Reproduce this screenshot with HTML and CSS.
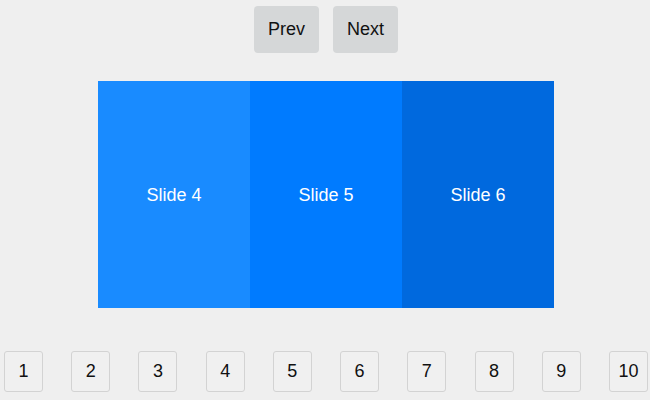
FILE: index.html
```html
<!DOCTYPE html>
<html>
<head>
<meta charset="utf-8">
<link rel="stylesheet" href="styles.css">
</head>
<body>
<div class="controls">
  <button class="nav">Prev</button>
  <button class="nav">Next</button>
</div>
<div class="viewport">
  <div class="slide s4">Slide 4</div>
  <div class="slide s5">Slide 5</div>
  <div class="slide s6">Slide 6</div>
</div>
<div class="pager">
  <button class="page">1</button>
  <button class="page">2</button>
  <button class="page">3</button>
  <button class="page">4</button>
  <button class="page">5</button>
  <button class="page">6</button>
  <button class="page">7</button>
  <button class="page">8</button>
  <button class="page">9</button>
  <button class="page">10</button>
</div>
</body>
</html>
```
FILE: styles.css
```css
html, body {
  margin: 0;
  padding: 0;
  background: #efefef;
  font-family: "Liberation Sans", Arial, sans-serif;
  width: 650px;
  height: 400px;
  overflow: hidden;
}
.controls {
  display: flex;
  justify-content: center;
  gap: 14px;
  padding-top: 6px;
  padding-left: 2px;
}
.nav {
  width: 65px;
  height: 47px;
  border: none;
  border-radius: 4px;
  background: #d5d7d8;
  color: #111;
  font-family: inherit;
  font-size: 18px;
  padding: 0;
}
.viewport {
  display: flex;
  width: 456px;
  height: 227px;
  margin: 28px 0 0 98px;
}
.slide {
  flex: 1;
  display: flex;
  align-items: center;
  justify-content: center;
  color: #fff;
  font-size: 18px;
  padding-top: 2px;
}
.s4 { background: #198bff; }
.s5 { background: #007bff; }
.s6 { background: #0069de; }
.pager {
  display: flex;
  justify-content: space-between;
  margin-top: 43px;
  padding: 0 2px 0 4px;
}
.page {
  width: 39px;
  height: 41px;
  border: 1px solid #d3d3d3;
  border-radius: 3px;
  background: #f0f0f0;
  color: #111;
  font-family: inherit;
  font-size: 18px;
  padding: 0;
}
```
